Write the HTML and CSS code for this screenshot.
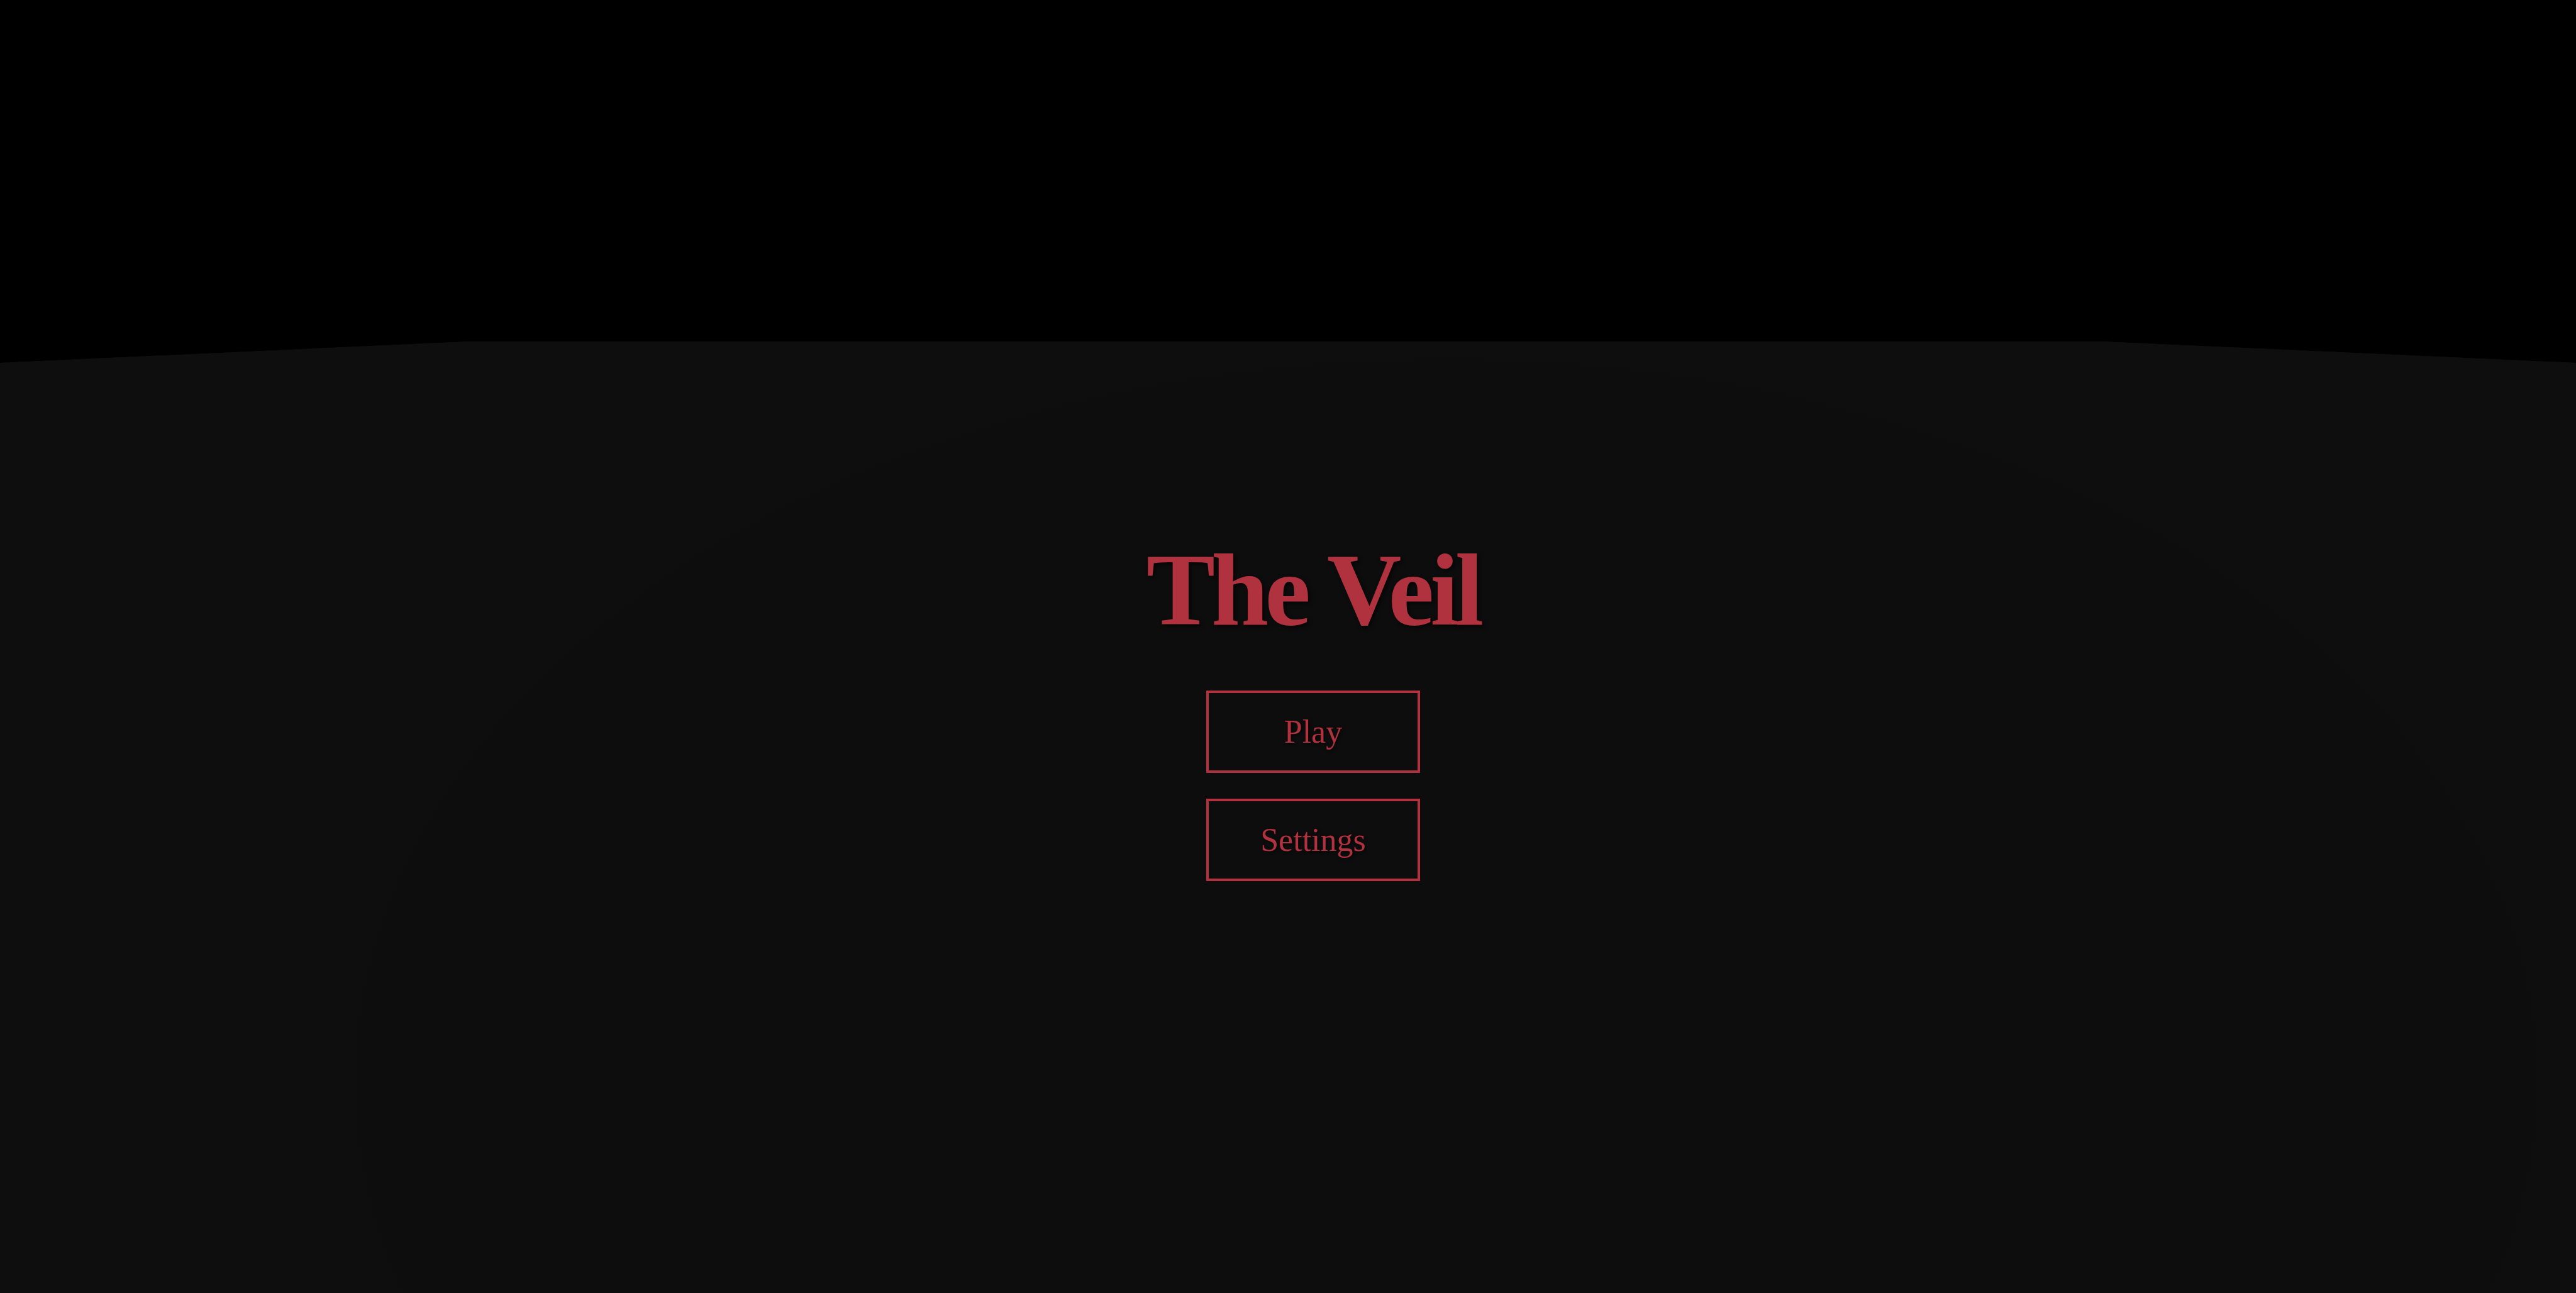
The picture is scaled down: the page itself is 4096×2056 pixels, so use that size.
FILE: index.html
```html
<!DOCTYPE html>
<html lang="en">
<head>
<meta charset="utf-8">
<title>The Veil</title>
<link rel="stylesheet" href="styles.css">
</head>
<body>
<div class="sky"></div>
<main class="stage">
  <div class="menu">
    <h1 class="title">The Veil</h1>
    <div class="buttons">
      <button class="btn">Play</button>
      <button class="btn">Settings</button>
    </div>
  </div>
</main>
</body>
</html>
```

FILE: styles.css
```css
html, body {
  margin: 0;
  padding: 0;
  background: #000;
  height: 100%;
  overflow: hidden;
}

body {
  display: flex;
  flex-direction: column;
  font-family: "Liberation Serif", "DejaVu Serif", serif;
}

.sky {
  height: 543px;
  flex: none;
}

.stage {
  flex: 1;
  background:
    radial-gradient(ellipse 1752px 1160px at 2300px 1177px, #0d0d0d 97%, #0e0e0e 100%);
  background-color: #0e0e0e;
  clip-path: polygon(0 34px, 745px 0, 3343px 0, 100% 34px, 100% 100%, 0 100%);
  display: flex;
  justify-content: center;
}

.menu {
  display: flex;
  flex-direction: column;
  align-items: center;
  padding-top: 313px;
  padding-left: 80px;
}

.title {
  margin: 0;
  font-size: 164px;
  line-height: 164px;
  font-weight: 700;
  letter-spacing: -6px;
  color: #b0323f;
  text-shadow: 3px 3px 6px rgba(0, 0, 0, 0.6);
}

.buttons {
  margin-top: 78px;
  display: flex;
  flex-direction: column;
  gap: 41px;
}

.btn {
  width: 340px;
  height: 131px;
  box-sizing: border-box;
  border: 4px solid #b0323f;
  background: transparent;
  color: #b0323f;
  font-family: "Liberation Serif", "DejaVu Serif", serif;
  font-size: 52px;
  line-height: 1;
  padding: 0;
  display: flex;
  align-items: center;
  justify-content: center;
  text-shadow: 2px 2px 4px rgba(0, 0, 0, 0.6);
}
```
